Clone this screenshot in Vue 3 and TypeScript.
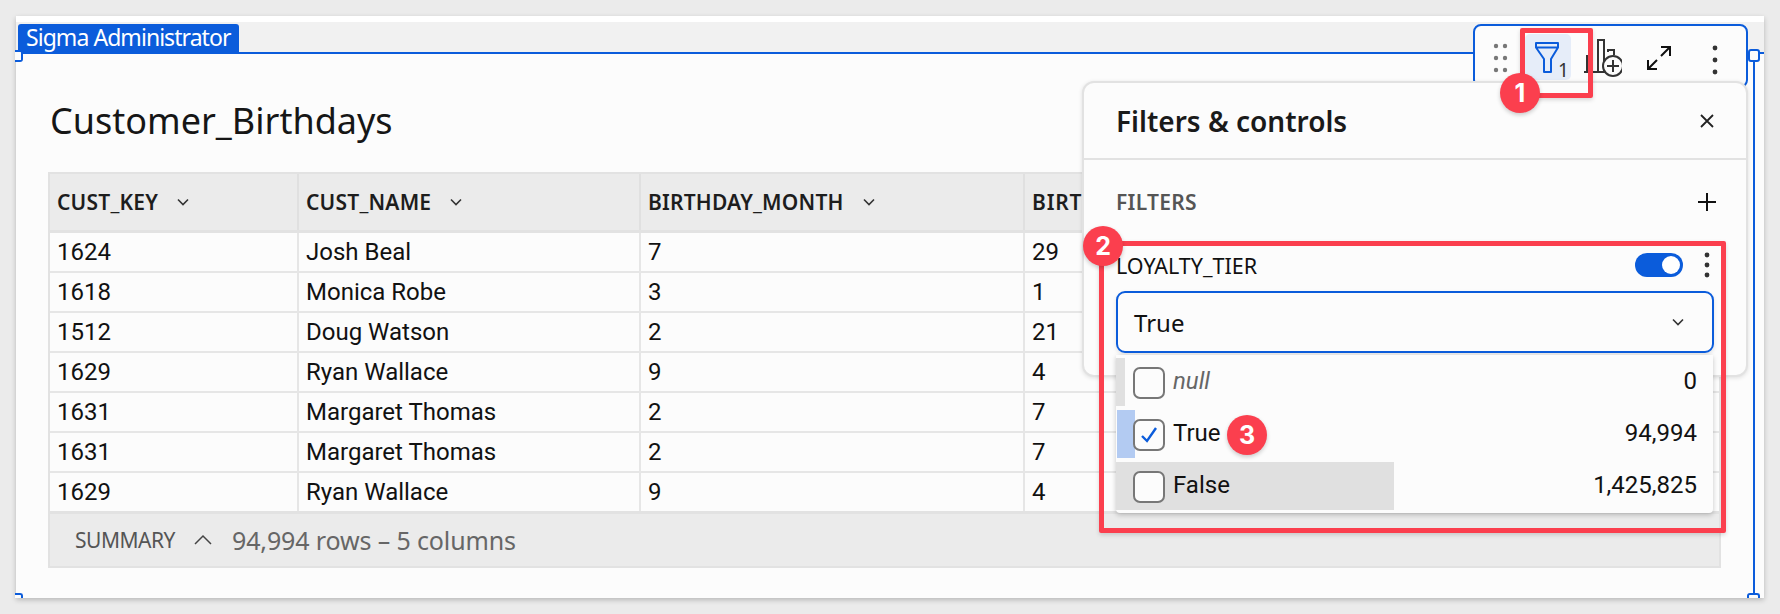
<script setup lang="ts">
const headers = [
  { name: 'CUST_KEY', chevron: true },
  { name: 'CUST_NAME', chevron: true },
  { name: 'BIRTHDAY_MONTH', chevron: true },
  { name: 'BIRTHDAY_DAY', chevron: true },
]
const rows: string[][] = [
  ['1624', 'Josh Beal', '7', '29'],
  ['1618', 'Monica Robe', '3', '1'],
  ['1512', 'Doug Watson', '2', '21'],
  ['1629', 'Ryan Wallace', '9', '4'],
  ['1631', 'Margaret Thomas', '2', '7'],
  ['1631', 'Margaret Thomas', '2', '7'],
  ['1629', 'Ryan Wallace', '9', '4'],
]
const options = [
  { label: 'null', count: '0', checked: false, kind: 'null' },
  { label: 'True', count: '94,994', checked: true, kind: 'true' },
  { label: 'False', count: '1,425,825', checked: false, kind: 'false' },
]
</script>

<template>
  <div class="page">
    <div class="card">
      <div class="strip"></div>
      <div class="tabbar"><div class="tab">Sigma Administrator</div></div>
      <div class="content">
        <h1 class="title">Customer_Birthdays</h1>
        <div class="table">
          <div class="thead">
            <div v-for="h in headers" :key="h.name" class="th">
              <span>{{ h.name }}</span>
              <svg class="chev" width="14" height="10" viewBox="0 0 14 10"><path d="M2 2.5l5 5 5-5" fill="none" stroke="#333" stroke-width="1.6" /></svg>
            </div>
          </div>
          <div v-for="(r, i) in rows" :key="i" class="tr">
            <div v-for="(c, j) in r" :key="j" class="td">{{ c }}</div>
          </div>
          <div class="summary">
            <span class="sum-label">SUMMARY</span>
            <svg width="20" height="12" viewBox="0 0 20 12"><path d="M2 10l8-8 8 8" fill="none" stroke="#444" stroke-width="1.5" /></svg>
            <span class="sum-info">94,994 rows – 5 columns</span>
          </div>
        </div>
      </div>
    </div>

    <div class="frame-right"></div>
    <div class="handle h-left"></div>
    <div class="handle h-right"></div>
    <div class="handle h-bl"></div>
    <div class="handle h-br"></div>

    <div class="toolbar">
      <svg class="i-drag" width="20" height="34" viewBox="0 0 20 34"><g fill="#777"><circle cx="4" cy="5" r="2.2" /><circle cx="13" cy="5" r="2.2" /><circle cx="4" cy="17" r="2.2" /><circle cx="13" cy="17" r="2.2" /><circle cx="4" cy="29" r="2.2" /><circle cx="13" cy="29" r="2.2" /></g></svg>
      <div class="filter-btn">
        <svg width="26" height="33" viewBox="0 0 26 33"><path d="M2 2h22v4.5L17 18v13h-7V18L2 6.5zM2 6.5h22" fill="none" stroke="#0b5cdb" stroke-width="2" stroke-linejoin="round" /></svg>
        <span class="badge-count">1</span>
      </div>
      <svg class="i-chart" width="38" height="40" viewBox="0 0 38 40"><g fill="none" stroke="#333" stroke-width="2"><path d="M3 34V17" /><path d="M0 34h24" /><path d="M14 34V2h6v32" /><path d="M24 14V12h6v5" /><circle cx="29" cy="28" r="10" fill="#fcfcfc" /><path d="M29 22v12M23 28h12" /></g></svg>
      <svg class="i-expand" width="26" height="26" viewBox="0 0 26 26"><g fill="none" stroke="#111" stroke-width="2"><path d="M15 11L24 2M15 2h9v9" /><path d="M11 15L2 24M2 15v9h9" /></g></svg>
      <svg class="i-kebab" width="8" height="32" viewBox="0 0 8 32"><g fill="#333"><circle cx="4" cy="4" r="2.4" /><circle cx="4" cy="16" r="2.4" /><circle cx="4" cy="28" r="2.4" /></g></svg>
    </div>

    <section class="panel">
      <header class="panel-head">
        <h2>Filters &amp; controls</h2>
        <svg width="16" height="16" viewBox="0 0 16 16"><path d="M2 2l12 12M14 2L2 14" stroke="#222" stroke-width="1.8" /></svg>
      </header>
      <div class="filters-row">
        <span>FILTERS</span>
        <svg width="20" height="20" viewBox="0 0 20 20"><path d="M10 1v18M1 10h18" stroke="#111" stroke-width="2" /></svg>
      </div>
      <div class="filter-name-row">
        <span class="fname">LOYALTY_TIER</span>
        <span class="toggle"><span class="knob"></span></span>
        <svg class="fk" width="6" height="26" viewBox="0 0 6 26"><g fill="#333"><circle cx="3" cy="3" r="2.4" /><circle cx="3" cy="13" r="2.4" /><circle cx="3" cy="23" r="2.4" /></g></svg>
      </div>
      <div class="select">
        <span>True</span>
        <svg width="14" height="10" viewBox="0 0 14 10"><path d="M2 2.5l5 5 5-5" fill="none" stroke="#333" stroke-width="1.6" /></svg>
      </div>
    </section>

    <div class="dropdown">
      <div class="mark-null"></div>
      <div class="mark-true"></div>
      <div class="mark-false"></div>
      <div v-for="o in options" :key="o.label" class="opt" :class="o.kind">
        <span class="check">
          <svg v-if="o.checked" width="22" height="22" viewBox="0 0 22 22"><path d="M4 12l5 5L18 4" fill="none" stroke="#0b5cdb" stroke-width="2.4" /></svg>
        </span>
        <span class="opt-label">{{ o.label }}</span>
        <span class="opt-count">{{ o.count }}</span>
      </div>
    </div>

    <div class="red r1"></div>
    <div class="red r2"></div>
    <div class="num n1">1</div>
    <div class="num n2">2</div>
    <div class="num n3">3</div>
  </div>
</template>

<style>
html, body { margin: 0; background: #ebebeb; }
</style>

<style scoped>
.page {
  position: relative;
  width: 1780px;
  height: 614px;
  box-sizing: border-box;
  padding: 16px;
  background: #ebebeb;
  overflow: hidden;
  font-family: Roboto, sans-serif;
  color: #111;
}
.card {
  width: 1748px;
  height: 582px;
  background: #fcfcfc;
  box-shadow: 0 2px 5px rgba(0, 0, 0, 0.22);
  display: flex;
  flex-direction: column;
}
.strip { height: 6px; background: #fff; flex: none; }
.tabbar {
  height: 32px;
  flex: none;
  box-sizing: border-box;
  background: #f1f1f1;
  border-bottom: 2px solid #0b5cdb;
  padding: 2px 0 0 2px;
}
.tab {
  display: inline-block;
  box-sizing: border-box;
  width: 221px;
  height: 29px;
  padding-left: 8px;
  background: #0b5cdb;
  color: #fff;
  border-radius: 3px 3px 0 0;
  font: 23px/27px "Noto Sans", sans-serif;
  letter-spacing: -0.95px;
  white-space: nowrap;
}
.content { padding: 0 43px 0 32px; flex: 1; }
.title {
  margin: 0;
  height: 118px;
  box-sizing: border-box;
  padding: 44px 0 0 2px;
  font: 400 36px/46px "Noto Sans", sans-serif;
  color: #161616;
}
.table { border: 2px solid #e2e2e2; width: 1673px; box-sizing: border-box; }
.thead, .tr { display: grid; grid-template-columns: 249px 342px 384px 1fr; }
.thead { height: 56px; background: #ebebeb; border-bottom: 3px solid #e2e2e2; }
.th {
  display: flex;
  align-items: center;
  gap: 18px;
  padding-left: 7px;
  border-right: 2px solid #e0e0e0;
  font: 600 21px "Noto Sans", sans-serif;
  letter-spacing: 0.2px;
  color: #1d1d1d;
  white-space: nowrap;
}
.th:last-child { border-right: 0; letter-spacing: 0.8px; }
.tr { height: 40px; box-sizing: border-box; border-bottom: 2px solid #e6e6e6; }
.tr:nth-last-child(2) { border-bottom: 0; height: 38px; }
.td {
  padding-left: 7px;
  border-right: 2px solid #e6e6e6;
  font-size: 24px;
  line-height: 38px;
}
.td:last-child { border-right: 0; }
.summary {
  height: 55px;
  box-sizing: border-box;
  background: #ebebeb;
  border-top: 3px solid #e2e2e2;
  display: flex;
  align-items: center;
  padding-left: 25px;
}
.sum-label { font: 21px "Noto Sans", sans-serif; letter-spacing: -0.5px; color: #555; width: 118px; }
.sum-info { font: 25px "Noto Sans", sans-serif; letter-spacing: -0.13px; color: #666; margin-left: 19px; }

.frame-right { position: absolute; left: 1753px; top: 60px; width: 2px; height: 534px; background: #0b5cdb; }
.handle { position: absolute; box-sizing: border-box; border: 2px solid #0b5cdb; border-radius: 3px; background: #fcfcfc; }
.h-left { left: 15px; top: 50px; width: 8px; height: 12px; border-left: 0; border-radius: 0 3px 3px 0; }
.h-right { left: 1748px; top: 49px; width: 12px; height: 13px; }
.h-bl { left: 15px; top: 593px; width: 8px; height: 5px; border-left: 0; border-bottom: 0; border-radius: 0 3px 0 0; }
.h-br { left: 1747px; top: 593px; width: 13px; height: 5px; border-bottom: 0; border-radius: 3px 3px 0 0; }

.toolbar {
  position: absolute;
  left: 1473px;
  top: 24px;
  width: 275px;
  height: 64px;
  box-sizing: border-box;
  border: 2px solid #0b5cdb;
  border-radius: 8px;
  background: #fcfcfc;
}
.toolbar svg { position: absolute; }
.i-drag { left: 17px; top: 15px; }
.filter-btn { position: absolute; left: 50px; top: 8px; width: 46px; height: 46px; background: #e6edf9; border-radius: 5px; }
.filter-btn svg { left: 9px; top: 7px; }
.badge-count { position: absolute; left: 33px; top: 25px; font: 19px/22px "Noto Sans", sans-serif; color: #333; }
.i-chart { left: 109px; top: 12px; }
.i-expand { left: 171px; top: 19px; }
.i-kebab { left: 236px; top: 18px; }

.panel {
  position: absolute;
  left: 1082px;
  top: 81px;
  width: 666px;
  height: 296px;
  box-sizing: border-box;
  background: #fcfcfc;
  border: 2px solid #e2e2e2;
  border-radius: 12px;
  box-shadow: 0 1px 4px rgba(0, 0, 0, 0.12);
}
.panel-head {
  height: 77px;
  box-sizing: border-box;
  border-bottom: 2px solid #e2e2e2;
  display: flex;
  align-items: center;
  justify-content: space-between;
  padding: 0 31px 0 32px;
}
.panel-head h2 { margin: 0; font: 600 28px "Noto Sans", sans-serif; color: #1a1a1a; white-space: nowrap; }
.filters-row {
  height: 84px;
  box-sizing: border-box;
  display: flex;
  justify-content: space-between;
  align-items: center;
  padding: 0 29px 0 32px;
  font: 600 21px "Noto Sans", sans-serif;
  letter-spacing: 0.3px;
  color: #555;
}
.filter-name-row {
  height: 40px;
  margin-top: 1px;
  display: flex;
  align-items: center;
  padding: 0 36px 0 32px;
}
.fname { font: 21.5px "Noto Sans", sans-serif; flex: 1; }
.toggle { width: 48px; height: 24px; border-radius: 12px; background: #0b5cdb; position: relative; margin-right: 21px; }
.knob { position: absolute; right: 3px; top: 3px; width: 18px; height: 18px; border-radius: 50%; background: #fff; }
.select {
  margin: 6px 32px 0;
  height: 62px;
  box-sizing: border-box;
  border: 2px solid #0b5cdb;
  border-radius: 9px;
  display: flex;
  align-items: center;
  justify-content: space-between;
  padding: 0 27px 0 16px;
  font: 24px "Noto Sans", sans-serif;
  box-shadow: 0 2px 4px rgba(0, 0, 0, 0.1);
}

.dropdown {
  position: absolute;
  left: 1116px;
  top: 355px;
  width: 597px;
  height: 158px;
  box-sizing: border-box;
  padding-top: 4px;
  background: #fcfcfc;
  border-radius: 0 0 4px 4px;
  box-shadow: 0 2px 5px rgba(0, 0, 0, 0.22);
}
.mark-null { position: absolute; left: 0; top: 3px; width: 9px; height: 48px; background: #e0e0e0; }
.mark-true { position: absolute; left: 1px; top: 55px; width: 18px; height: 48px; background: #b3cbf2; }
.mark-false { position: absolute; left: 0; top: 107px; width: 278px; height: 48px; background: #e0e0e0; }
.opt { position: relative; height: 52px; display: flex; align-items: center; padding: 0 16px 5px 17px; box-sizing: border-box; font-size: 24px; }
.check {
  width: 32px;
  height: 32px;
  box-sizing: border-box;
  border: 2px solid #777;
  border-radius: 7px;
  background: #fcfcfc;
  margin-right: 8px;
  display: flex;
  align-items: center;
  justify-content: center;
}
.opt-label { flex: 1; line-height: 32px; margin-top: -3px; }
.opt-count { line-height: 32px; margin-top: -3px; }
.null .opt-label { font-style: italic; color: #666; }

.red { position: absolute; box-sizing: border-box; border: 5px solid #fb3f4e; border-radius: 2px; box-shadow: 0 2px 4px rgba(0, 0, 0, 0.15); }
.r1 { left: 1520px; top: 28px; width: 73px; height: 70px; }
.r2 { left: 1099px; top: 241px; width: 627px; height: 292px; }
.num {
  position: absolute;
  width: 40px;
  height: 40px;
  border-radius: 50%;
  background: #fb3f4e;
  color: #fff;
  font: 700 25px/40px Inter, sans-serif;
  text-align: center;
  box-shadow: 0 2px 4px rgba(0, 0, 0, 0.2);
}
.n1 { left: 1500px; top: 73px; }
.n2 { left: 1083px; top: 226px; }
.n3 { left: 1227px; top: 415px; }
</style>
